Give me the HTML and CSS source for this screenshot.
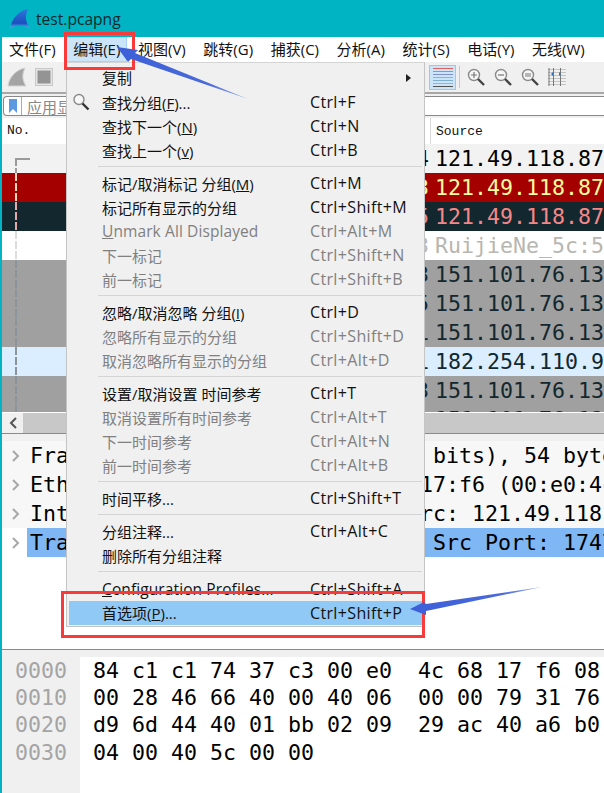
FILE: index.html
```html
<!DOCTYPE html>
<html lang="zh-CN">
<head>
    <meta charset="UTF-8">
    <title>test.pcapng</title>
    <link rel="stylesheet" href="styles.css">
</head>
<body>
<div class="app">
    <div class="titlebar">
        <svg class="fin" width="21" height="20" viewBox="0 0 21 20">
            <defs>
                <linearGradient id="finBlue" x1="0.5" y1="0" x2="0.5" y2="1">
                    <stop offset="0" stop-color="#2f78dc"/>
                    <stop offset="0.75" stop-color="#1b4fc0"/>
                    <stop offset="1" stop-color="#5fb4ee"/>
                </linearGradient>
            </defs>
            <path d="M0 19 C2 10 8 2 18 0 C15 6 15 13 20 19 C13 16 6 16 0 19 Z" fill="url(#finBlue)"/>
        </svg>
        <span class="title">test.pcapng</span>
    </div>

    <div class="menubar">
        <span class="menubar-item">文件(F)</span>
        <span class="menubar-item menubar-item-on">编辑(E)</span>
        <span class="menubar-item">视图(V)</span>
        <span class="menubar-item">跳转(G)</span>
        <span class="menubar-item">捕获(C)</span>
        <span class="menubar-item">分析(A)</span>
        <span class="menubar-item">统计(S)</span>
        <span class="menubar-item">电话(Y)</span>
        <span class="menubar-item">无线(W)</span>
    </div>

    <div class="toolbar">
        <div class="tool-group">
            <svg width="20" height="20" viewBox="0 0 20 20"><path d="M1 19 C2 11 8 3 18 1 C15 7 15 13 19 19 Z" fill="#a4a4a4" stroke="#d4d4d4"/></svg>
            <svg class="tool-stop" width="18" height="18" viewBox="0 0 18 18"><rect x="0.5" y="0.5" width="17" height="17" fill="#e4e4e4" stroke="#c8c8c8"/><rect x="2.5" y="2.5" width="13" height="13" fill="#949494"/></svg>
        </div>
        <div class="tool-group tool-group-right">
            <span class="tool-active">
                <svg width="20" height="20" viewBox="0 0 20 20">
                    <path d="M0 1.5H20" stroke="#e06060"/>
                    <path d="M0 4.5H20" stroke="#d08080"/>
                    <path d="M0 7.5H20" stroke="#8090c8"/>
                    <path d="M0 10.5H20" stroke="#90c860"/>
                    <path d="M0 13.5H20" stroke="#80b0d0"/>
                    <path d="M0 16.5H20" stroke="#d0b050"/>
                    <path d="M0 19.5H20" stroke="#505050"/>
                </svg>
            </span>
            <span class="tool-sep"></span>
            <svg class="tool-zoom" width="18" height="18" viewBox="0 0 18 18"><circle cx="7" cy="7" r="5.5" fill="#f6f6f6" stroke="#8a8a8a" stroke-width="1.4"/><path d="M11 11L17 17" stroke="#444" stroke-width="2.4"/><path d="M4 7H10M7 4V10" stroke="#777" stroke-width="1.2"/></svg>
            <svg class="tool-zoom" width="18" height="18" viewBox="0 0 18 18"><circle cx="7" cy="7" r="5.5" fill="#f6f6f6" stroke="#8a8a8a" stroke-width="1.4"/><path d="M11 11L17 17" stroke="#444" stroke-width="2.4"/><path d="M4 7H10" stroke="#777" stroke-width="1.2"/></svg>
            <svg class="tool-zoom" width="18" height="18" viewBox="0 0 18 18"><circle cx="7" cy="7" r="5.5" fill="#f6f6f6" stroke="#8a8a8a" stroke-width="1.4"/><path d="M11 11L17 17" stroke="#444" stroke-width="2.4"/><path d="M4 6H10M4 8H10" stroke="#777"/></svg>
            <svg class="tool-zoom" width="18" height="18" viewBox="0 0 18 18">
                <path d="M0 1.5H18M0 4.5H18M0 7.5H18M0 10.5H18M0 13.5H18M0 16.5H18" stroke="#c4c4c4"/>
                <path d="M1 0V18M5.5 0V18M12.5 0V18" stroke="#777"/>
                <path d="M4 4L2 6L4 8ZM10 4L12 6L10 8Z" fill="#2a6fc0" transform="translate(1 0)"/>
            </svg>
        </div>
    </div>

    <div class="filterbar">
        <div class="filter-box">
            <span class="filter-mark">
                <svg width="8" height="14" viewBox="0 0 8 14"><path d="M0 0H8V14L4 10L0 14Z" fill="#5b9ae0"/></svg>
            </span>
            <span class="filter-text">应用显示过滤器</span>
        </div>
    </div>

    <div class="list-header">
        <span class="list-head-no">No.</span>
        <span class="list-head-source">Source</span>
    </div>

    <div class="list">
        <span class="tree-corner"></span>
        <div class="row row-plain"><span class="row-time">4</span><span class="row-src">121.49.118.87</span></div>
        <div class="row row-red"><span class="row-time">3</span><span class="row-src">121.49.118.87</span></div>
        <div class="row row-dark"><span class="row-time">5</span><span class="row-src">121.49.118.87</span></div>
        <div class="row row-white"><span class="row-time">3</span><span class="row-src">RuijieNe_5c:5</span></div>
        <div class="row row-gray"><span class="row-time">3</span><span class="row-src">151.101.76.13</span></div>
        <div class="row row-gray"><span class="row-time">5</span><span class="row-src">151.101.76.13</span></div>
        <div class="row row-gray"><span class="row-time">1</span><span class="row-src">151.101.76.13</span></div>
        <div class="row row-blue"><span class="row-time">1</span><span class="row-src">182.254.110.9</span></div>
        <div class="row row-gray"><span class="row-time">3</span><span class="row-src">151.101.76.13</span></div>
        <div class="row row-gray"><span class="row-time">3</span><span class="row-src">151.101.76.13</span></div>
    </div>

    <div class="hscroll">
        <span class="hscroll-btn">
            <svg width="8" height="12" viewBox="0 0 8 12"><path d="M7 1L2 6L7 11" fill="none" stroke="#555" stroke-width="2"/></svg>
        </span>
        <span class="hscroll-thumb"></span>
    </div>

    <div class="splitter"></div>

    <div class="details">
        <div class="detail"><svg class="chev" width="8" height="12" viewBox="0 0 8 12"><path d="M1 1L6 6L1 11" fill="none" stroke="#a8a8a8" stroke-width="2"/></svg><span class="detail-text">Frame 5: 54 bytes on wire (432 bits), 54 bytes captured</span></div>
        <div class="detail"><svg class="chev" width="8" height="12" viewBox="0 0 8 12"><path d="M1 1L6 6L1 11" fill="none" stroke="#a8a8a8" stroke-width="2"/></svg><span class="detail-text">Ethernet II, Src: RealtekS_68:17:f6 (00:e0:4c:68:17:f6)</span></div>
        <div class="detail"><svg class="chev" width="8" height="12" viewBox="0 0 8 12"><path d="M1 1L6 6L1 11" fill="none" stroke="#a8a8a8" stroke-width="2"/></svg><span class="detail-text">Internet Protocol Version 4, Src: 121.49.118.87</span></div>
        <div class="detail detail-on"><svg class="chev" width="8" height="12" viewBox="0 0 8 12"><path d="M1 1L6 6L1 11" fill="none" stroke="#a8a8a8" stroke-width="2"/></svg><span class="detail-text">Transmission Control Protocol, Src Port: 17470</span></div>
    </div>

    <div class="splitter"></div>

    <div class="hex">
        <pre class="hex-offsets">0000
0010
0020
0030</pre>
        <pre class="hex-bytes">84 c1 c1 74 37 c3 00 e0  4c 68 17 f6 08 00
00 28 46 66 40 00 40 06  00 00 79 31 76 00
d9 6d 44 40 01 bb 02 09  29 ac 40 a6 b0 00
04 00 40 5c 00 00</pre>
    </div>

    <!-- edit menu, open over the window -->
    <div class="menu">
        <div class="item item-first"><span class="item-label">复制</span><span class="item-arrow"></span></div>
        <div class="item">
            <svg class="item-icon" width="18" height="18" viewBox="0 0 18 18"><circle cx="7" cy="6.5" r="5" fill="#f8f8f8" stroke="#8a8a8a" stroke-width="1.4"/><path d="M10.5 10.5L16.5 16.5" stroke="#333" stroke-width="2.4"/></svg>
            <span class="item-label">查找分组(<u>F</u>)...</span><span class="item-key">Ctrl+F</span>
        </div>
        <div class="item"><span class="item-label">查找下一个(<u>N</u>)</span><span class="item-key">Ctrl+N</span></div>
        <div class="item"><span class="item-label">查找上一个(<u>v</u>)</span><span class="item-key">Ctrl+B</span></div>
        <div class="sep"></div>
        <div class="item"><span class="item-label">标记/取消标记 分组(<u>M</u>)</span><span class="item-key">Ctrl+M</span></div>
        <div class="item"><span class="item-label">标记所有显示的分组</span><span class="item-key">Ctrl+Shift+M</span></div>
        <div class="item item-off"><span class="item-label item-latin"><u>U</u>nmark All Displayed</span><span class="item-key">Ctrl+Alt+M</span></div>
        <div class="item item-off"><span class="item-label">下一标记</span><span class="item-key">Ctrl+Shift+N</span></div>
        <div class="item item-off"><span class="item-label">前一标记</span><span class="item-key">Ctrl+Shift+B</span></div>
        <div class="sep"></div>
        <div class="item"><span class="item-label">忽略/取消忽略 分组(<u>I</u>)</span><span class="item-key">Ctrl+D</span></div>
        <div class="item item-off"><span class="item-label">忽略所有显示的分组</span><span class="item-key">Ctrl+Shift+D</span></div>
        <div class="item item-off"><span class="item-label">取消忽略所有显示的分组</span><span class="item-key">Ctrl+Alt+D</span></div>
        <div class="sep"></div>
        <div class="item"><span class="item-label">设置/取消设置 时间参考</span><span class="item-key">Ctrl+T</span></div>
        <div class="item item-off"><span class="item-label">取消设置所有时间参考</span><span class="item-key">Ctrl+Alt+T</span></div>
        <div class="item item-off"><span class="item-label">下一时间参考</span><span class="item-key">Ctrl+Alt+N</span></div>
        <div class="item item-off"><span class="item-label">前一时间参考</span><span class="item-key">Ctrl+Alt+B</span></div>
        <div class="sep"></div>
        <div class="item"><span class="item-label">时间平移...</span><span class="item-key">Ctrl+Shift+T</span></div>
        <div class="sep"></div>
        <div class="item"><span class="item-label">分组注释...</span><span class="item-key">Ctrl+Alt+C</span></div>
        <div class="item"><span class="item-label">删除所有分组注释</span></div>
        <div class="sep"></div>
        <div class="item"><span class="item-label item-latin"><u>C</u>onfiguration Profiles...</span><span class="item-key">Ctrl+Shift+A</span></div>
        <div class="item item-on"><span class="item-label">首选项(<u>P</u>)...</span><span class="item-key">Ctrl+Shift+P</span></div>
    </div>

    <!-- red boxes and arrows drawn on the screenshot -->
    <div class="mark mark-edit"></div>
    <div class="mark mark-prefs"></div>
    <svg class="arrows" width="604" height="793" viewBox="0 0 604 793">
        <defs>
            <linearGradient id="arrowOne" gradientUnits="userSpaceOnUse" x1="117" y1="47" x2="248" y2="99">
                <stop offset="0" stop-color="#3c5fd8"/>
                <stop offset="0.7" stop-color="#4a6ad8"/>
                <stop offset="1" stop-color="#9fb2ea"/>
            </linearGradient>
            <linearGradient id="arrowTwo" gradientUnits="userSpaceOnUse" x1="410" y1="609" x2="542" y2="587">
                <stop offset="0" stop-color="#3c5fd8"/>
                <stop offset="0.7" stop-color="#4a6ad8"/>
                <stop offset="1" stop-color="#9fb2ea"/>
            </linearGradient>
        </defs>
        <path d="M117 47L138 50L135 53L248 99L131 59L128 62Z" fill="url(#arrowOne)"/>
        <path d="M410 609L424 602L426 604L542 587L426 611L426 615Z" fill="url(#arrowTwo)"/>
    </svg>
</div>
</body>
</html>
```

FILE: styles.css
```css
* {
    box-sizing: border-box;
}
body {
    margin: 0;
    font-family: "Open Sans", "Noto Sans CJK SC", sans-serif;
    background-color: #fff;
}
pre {
    margin: 0;
    font: inherit;
}
.app {
    position: relative;
    width: 604px;
    height: 793px;
    overflow: hidden;
    border-left: 2px solid #00b4c4;
    display: flex;
    flex-direction: column;
}

/* title and menu */
.titlebar {
    height: 37px;
    margin-left: -2px;
    flex: none;
    background-color: #00b4c4;
    display: flex;
    align-items: center;
    padding-left: 10px;
    gap: 5px;
}
.title {
    font-size: 15.6px;
    color: #0c2a2e;
}
.menubar {
    height: 25px;
    flex: none;
    display: flex;
    gap: 3.6px;
    background-color: #fff;
}
.menubar-item {
    font-size: 15px;
    line-height: 25px;
    padding: 0 7px;
    color: #111;
    white-space: nowrap;
}
.menubar-item-on {
    background-color: #cce4f7;
    outline: 1px solid #a8d2f2;
    outline-offset: -1px;
}

/* toolbar */
.toolbar {
    height: 32px;
    flex: none;
    background-color: #f0f0f0;
    border-bottom: 2px solid #a8a8a8;
    display: flex;
    align-items: center;
    padding: 0 38px 0 5px;
}
.tool-group {
    display: flex;
    align-items: center;
}
.tool-stop {
    margin-left: 8px;
}
.tool-group-right {
    margin-left: auto;
}
.tool-active {
    width: 27px;
    height: 25px;
    display: flex;
    align-items: center;
    justify-content: center;
    background-color: #cce4f7;
    border: 1px solid #99c9ef;
}
.tool-sep {
    width: 1px;
    height: 22px;
    margin: 0 7px 0 3px;
    background-color: #c8c8c8;
}
.tool-zoom {
    margin-right: 9px;
}
.tool-zoom:last-child {
    margin-right: 0;
}

/* display filter */
.filterbar {
    height: 24px;
    flex: none;
    padding: 2px 0 2px 1px;
    background-color: #f0f0f0;
}
.filter-box {
    height: 20px;
    display: flex;
    align-items: center;
    background-color: #fff;
    border: 1px solid #888;
    border-right: 0;
    border-radius: 4px 0 0 4px;
}
.filter-mark {
    width: 18px;
    height: 18px;
    display: flex;
    align-items: center;
    justify-content: center;
    border-right: 1px solid #aaa;
}
.filter-text {
    margin-left: 5px;
    font-size: 15px;
    color: #888;
}

/* packet list */
.list-header {
    height: 26px;
    flex: none;
    display: flex;
    align-items: center;
    background-color: #fff;
    font-family: "Liberation Mono", monospace;
    font-size: 13px;
    color: #111;
}
.list-head-no {
    width: 429px;
    padding-left: 5px;
    border-right: 1px solid #d8d8d8;
    line-height: 26px;
}
.list-head-source {
    padding-left: 5px;
}
.list {
    position: relative;
    height: 268px;
    flex: none;
    overflow: hidden;
    font-family: "DejaVu Sans Mono", monospace;
    font-size: 21.6px;
}
.row {
    position: relative;
    height: 29px;
    display: flex;
    line-height: 29px;
    white-space: nowrap;
}
.row::before {
    content: "";
    position: absolute;
    left: 13px;
    top: 0;
    bottom: 0;
    width: 2px;
    background: repeating-linear-gradient(var(--tree) 0 8px, transparent 8px 10px);
}
.row:first-of-type::before {
    top: 14px;
}
.tree-corner {
    position: absolute;
    z-index: 1;
    left: 13px;
    top: 14px;
    width: 15px;
    height: 2px;
    background-color: #9a9a9a;
}
.row-time {
    width: 428px;
    margin-right: 6px;
    text-align: right;
}
.row-plain { background-color: #f2f2f2; color: #000; --tree: #9a9a9a; }
.row-red { background-color: #a40000; color: #fffc9c; --tree: #f0d8c0; }
.row-dark { background-color: #12272e; color: #f78787; --tree: #e8a8a8; }
.row-white { background-color: #fff; color: #b8b6b0; --tree: #dcdcdc; }
.row-gray { background-color: #a0a0a0; color: #12272e; --tree: #8a949a; }
.row-blue { background-color: #daeeff; color: #12272e; --tree: #8a949a; }

.hscroll {
    height: 21px;
    flex: none;
    border-top: 1px solid #fff;
    display: flex;
    background-color: #f0f0f0;
}
.hscroll-btn {
    width: 21px;
    display: flex;
    align-items: center;
    justify-content: center;
}
.hscroll-thumb {
    flex: 1;
    background-color: #c8c8c8;
}
.splitter {
    height: 8px;
    flex: none;
    background-color: #f0f0f0;
    border-top: 1px solid #8a8a8a;
}

/* packet details */
.details {
    height: 208px;
    flex: none;
    overflow: hidden;
    font-family: "DejaVu Sans Mono", monospace;
    font-size: 21.6px;
    background-color: #fff;
}
.detail {
    height: 29px;
    display: flex;
    align-items: center;
    padding-left: 10px;
    white-space: pre;
    background-color: #f7f7f7;
}
.chev {
    flex: none;
}
.detail-text {
    margin-left: 7px;
    padding-left: 3px;
    flex: 1;
    line-height: 29px;
}
.detail-on .detail-text {
    background-color: #7fb6f4;
}
.detail-on {
    background-color: #fff;
}

/* packet bytes */
.hex {
    flex: 1;
    display: flex;
    font-family: "DejaVu Sans Mono", monospace;
    font-size: 21.6px;
    line-height: 27.2px;
    overflow: hidden;
}
.hex-offsets {
    width: 78px;
    flex: none;
    padding: 0 0 0 13px;
    background-color: #f0f0f0;
    color: #a4a4a4;
}
.hex-bytes {
    padding-left: 13px;
    color: #000;
}

/* edit menu */
.menu {
    position: absolute;
    left: 64px;
    top: 62px;
    width: 359px;
    height: 565px;
    padding-top: 3px;
    background-color: #f0f0f0;
    border: 1px solid #c4c4c4;
    border-top-color: #d4d4d4;
    font-size: 15px;
    color: #111;
}
.item {
    position: relative;
    height: 24px;
    margin: 0 2px;
    display: flex;
    align-items: center;
    padding-left: 33px;
    white-space: nowrap;
}
.item-first {
    padding-bottom: 2px;
}
.item-label {
    width: 208px;
    flex: none;
}
.item-latin {
    font-size: 15.5px;
    letter-spacing: 0.1px;
}
.item-key {
    font-size: 16px;
    letter-spacing: 0.35px;
}
.item-off {
    color: #808080;
}
.item-on {
    background-color: #90c8f6;
}
.item-icon {
    position: absolute;
    left: 3px;
    top: 3px;
}
.item-arrow {
    position: absolute;
    right: 11px;
    top: 8px;
    border-left: 5px solid #222;
    border-top: 4px solid transparent;
    border-bottom: 4px solid transparent;
}
.sep {
    height: 1px;
    margin: 4px 2px 4.1px 31px;
    background-color: #d4d4d4;
}

/* annotations */
.mark {
    position: absolute;
    border: 3px solid #f83a3a;
}
.mark-edit {
    left: 62px;
    top: 32px;
    width: 71px;
    height: 38px;
}
.mark-prefs {
    left: 59px;
    top: 591px;
    width: 364px;
    height: 47px;
}
.arrows {
    position: absolute;
    left: -2px;
    top: 0;
}
```
